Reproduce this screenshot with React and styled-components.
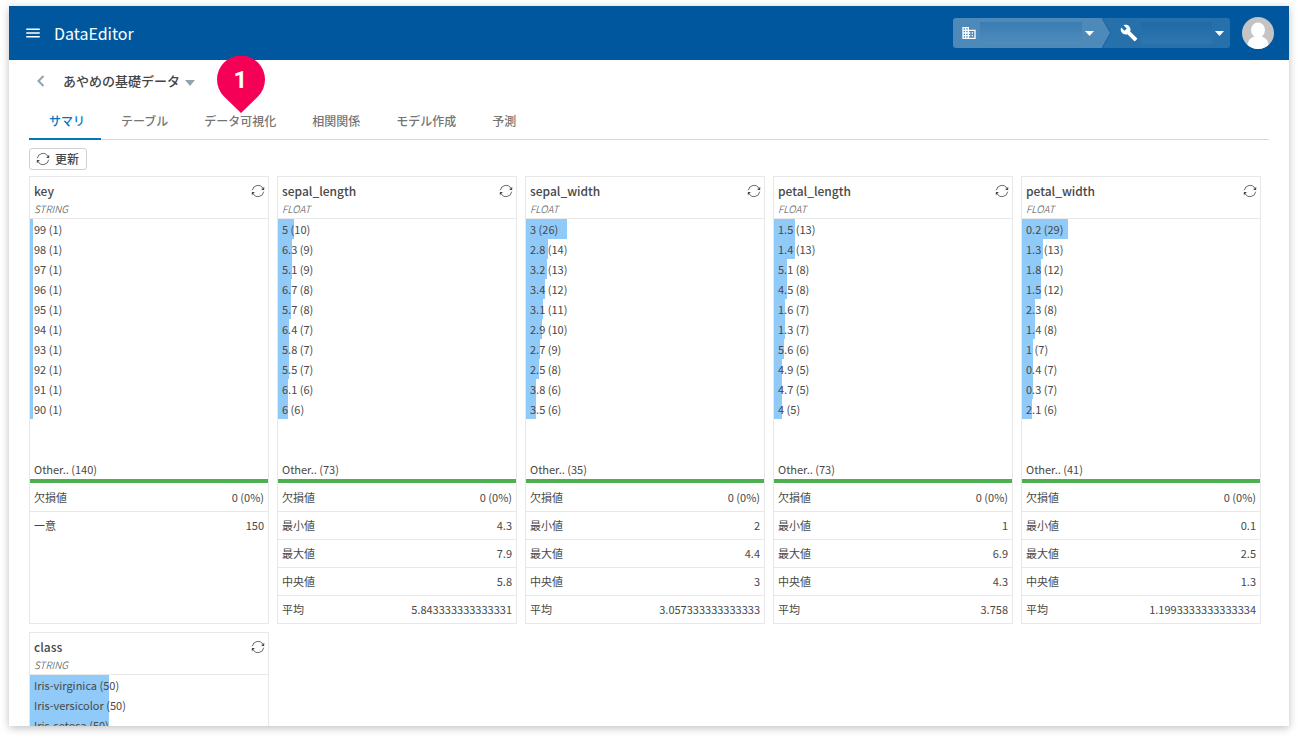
import styled, { createGlobalStyle } from "styled-components";
import { MdMenu, MdBusiness, MdBuild } from "react-icons/md";

const TOTAL = 150;

const tabs = ["サマリ", "テーブル", "データ可視化", "相関関係", "モデル作成", "予測"];

const columns = [
    {
        name: "key",
        type: "STRING",
        values: [["99", 1], ["98", 1], ["97", 1], ["96", 1], ["95", 1], ["94", 1], ["93", 1], ["92", 1], ["91", 1], ["90", 1]],
        other: 140,
        stats: [["欠損値", "0 (0%)"], ["一意", "150"]],
    },
    {
        name: "sepal_length",
        type: "FLOAT",
        values: [["5", 10], ["6.3", 9], ["5.1", 9], ["6.7", 8], ["5.7", 8], ["6.4", 7], ["5.8", 7], ["5.5", 7], ["6.1", 6], ["6", 6]],
        other: 73,
        stats: [["欠損値", "0 (0%)"], ["最小値", "4.3"], ["最大値", "7.9"], ["中央値", "5.8"], ["平均", "5.843333333333331"]],
    },
    {
        name: "sepal_width",
        type: "FLOAT",
        values: [["3", 26], ["2.8", 14], ["3.2", 13], ["3.4", 12], ["3.1", 11], ["2.9", 10], ["2.7", 9], ["2.5", 8], ["3.8", 6], ["3.5", 6]],
        other: 35,
        stats: [["欠損値", "0 (0%)"], ["最小値", "2"], ["最大値", "4.4"], ["中央値", "3"], ["平均", "3.057333333333333"]],
    },
    {
        name: "petal_length",
        type: "FLOAT",
        values: [["1.5", 13], ["1.4", 13], ["5.1", 8], ["4.5", 8], ["1.6", 7], ["1.3", 7], ["5.6", 6], ["4.9", 5], ["4.7", 5], ["4", 5]],
        other: 73,
        stats: [["欠損値", "0 (0%)"], ["最小値", "1"], ["最大値", "6.9"], ["中央値", "4.3"], ["平均", "3.758"]],
    },
    {
        name: "petal_width",
        type: "FLOAT",
        values: [["0.2", 29], ["1.3", 13], ["1.8", 12], ["1.5", 12], ["2.3", 8], ["1.4", 8], ["1", 7], ["0.4", 7], ["0.3", 7], ["2.1", 6]],
        other: 41,
        stats: [["欠損値", "0 (0%)"], ["最小値", "0.1"], ["最大値", "2.5"], ["中央値", "1.3"], ["平均", "1.1993333333333334"]],
    },
    {
        name: "class",
        type: "STRING",
        values: [["Iris-virginica", 50], ["Iris-versicolor", 50], ["Iris-setosa", 50]],
    },
];

function Caret({ width, height }) {
    return (
        <svg width={width} height={height} viewBox="0 0 10 5" preserveAspectRatio="none" aria-hidden="true">
            <path d="M0 0h10L5 5z" fill="currentColor" />
        </svg>
    );
}

function RefreshIcon() {
    return (
        <svg width="14" height="14" viewBox="0 0 14 14" aria-hidden="true">
            <g fill="none" stroke="currentColor" strokeWidth="0.8">
                <path d="M1.300 6.300A5.700 5.700 0 0 1 12 4.500" />
                <path d="M12.700 7.700A5.700 5.700 0 0 1 2 9.500" />
            </g>
            <path d="M13.200 2.800v3.100H10.100zM.8 11.200V8.100h3.100z" fill="currentColor" />
        </svg>
    );
}

function Avatar() {
    return (
        <svg width="32" height="32" viewBox="0 0 32 32" aria-hidden="true">
            <clipPath id="avatar">
                <circle cx="16" cy="16" r="16" />
            </clipPath>
            <g clipPath="url(#avatar)">
                <rect width="32" height="32" fill="#c4c4c4" />
                <ellipse cx="16" cy="13" rx="7" ry="7.5" fill="#fff" />
                <path d="M5 32c0-8 3-11 7-12.500h8c4 1.500 7 4.500 7 12.500z" fill="#fff" />
            </g>
        </svg>
    );
}

function ColumnCard({ name, type, values, other, stats }) {
    return (
        <Card>
            <CardHeader>
                <div>
                    <ColumnName>{name}</ColumnName>
                    <ColumnType>{type}</ColumnType>
                </div>
                <IconButton aria-label={`${name} を更新`}>
                    <RefreshIcon />
                </IconButton>
            </CardHeader>
            <Values>
                {values.map(([value, count]) => (
                    <Value key={value}>
                        <Bar style={{ width: `${(count / TOTAL) * 100}%` }} />
                        <span>{`${value} (${count})`}</span>
                    </Value>
                ))}
            </Values>
            <Other>{other && `Other.. (${other})`}</Other>
            {stats && (
                <Stats>
                    <tbody>
                        {stats.map(([label, value]) => (
                            <tr key={label}>
                                <th scope="row">{label}</th>
                                <td>{value}</td>
                            </tr>
                        ))}
                    </tbody>
                </Stats>
            )}
        </Card>
    );
}

export default function App() {
    return (
        <>
            <GlobalStyle />
            <Frame>
                <Header>
                    <IconButton aria-label="メニュー">
                        <MdMenu size={18} />
                    </IconButton>
                    <AppName>DataEditor</AppName>
                    <Switcher>
                        <Organization aria-label="組織">
                            <MdBusiness size={16} />
                            <OrganizationName />
                            <Caret width={9} height={5} />
                        </Organization>
                        <Arrow viewBox="0 0 9 30" preserveAspectRatio="none" aria-hidden="true">
                            <path d="M0 0h9v30H0z" fill="#2670ab" />
                            <path d="M0 0l8.500 15L0 30z" fill="#4d8aba" />
                            <path d="M0 0l8.500 15L0 30" fill="none" stroke="#1763a3" />
                        </Arrow>
                        <Project aria-label="プロジェクト">
                            <MdBuild size={18} />
                            <ProjectName />
                            <Caret width={9} height={5} />
                        </Project>
                    </Switcher>
                    <IconButton aria-label="アカウント">
                        <Avatar />
                    </IconButton>
                </Header>
                <Main>
                    <TitleRow>
                        <BackButton aria-label="戻る">
                            <svg width="8" height="12" viewBox="0 0 8 12" aria-hidden="true">
                                <path d="M6.500 1L1.500 6l5 5" fill="none" stroke="currentColor" strokeWidth="2" />
                            </svg>
                        </BackButton>
                        <TitleButton>
                            あやめの基礎データ
                            <Caret width={10} height={6} />
                        </TitleButton>
                    </TitleRow>
                    <Tabs>
                        {tabs.map((tab, index) => (
                            <Tab key={tab} $active={index === 0}>
                                {tab}
                                {index === 2 && (
                                    <Pin>
                                        <svg width="48" height="57" viewBox="0 0 48 57" aria-hidden="true">
                                            <path d="M24 57L7 40.500A24 24 0 1 1 41 40.500z" fill="#f50057" />
                                        </svg>
                                        <PinNumber>1</PinNumber>
                                    </Pin>
                                )}
                            </Tab>
                        ))}
                    </Tabs>
                    <Toolbar>
                        <RefreshButton>
                            <RefreshIcon />
                            更新
                        </RefreshButton>
                    </Toolbar>
                    <Cards>
                        {columns.map((column) => (
                            <ColumnCard key={column.name} {...column} />
                        ))}
                    </Cards>
                </Main>
            </Frame>
        </>
    );
}

const GlobalStyle = createGlobalStyle`
    * {
        box-sizing: border-box;
    }
    body {
        margin: 0;
        background-color: #fff;
        color: #484848;
        font-family: "Noto Sans CJK JP", sans-serif;
        font-size: 11px;
        line-height: 20px;
    }
    button {
        padding: 0;
        border: none;
        background: none;
        color: inherit;
        font: inherit;
        cursor: pointer;
    }
    svg {
        display: block;
        flex: none;
    }
`

const Frame = styled.div`
    display: flex;
    flex-direction: column;
    height: calc(100vh - 18px);
    margin: 6px 9px 12px;
    overflow: hidden;
    background-color: #fff;
    box-shadow: 0 2px 8px rgba(0, 0, 0, 0.25);
`

const Header = styled.header`
    display: flex;
    align-items: center;
    flex: none;
    height: 54px;
    padding: 0 15px;
    background-color: #00579d;
    color: #fff;
`

const IconButton = styled.button`
    display: flex;
`

const AppName = styled.h1`
    flex: 1;
    margin: 0 0 0 12px;
    font-size: 16px;
    font-weight: 400;
`

const Switcher = styled.div`
    display: flex;
    height: 30px;
    margin-right: 12px;
    border-radius: 3px;
    overflow: hidden;
`

const Organization = styled.button`
    display: flex;
    align-items: center;
    gap: 3px;
    padding: 0 8px;
    background-color: #4d8aba;
`

const Project = styled(Organization)`
    padding: 0 6px 0 9px;
    background-color: #2670ab;
`

const Arrow = styled.svg`
    width: 9px;
    height: 30px;
`

const OrganizationName = styled.span`
    width: 102px;
    height: 22px;
    background: linear-gradient(#3a7db3, #4f8cbb);
`

const ProjectName = styled(OrganizationName)`
    width: 71px;
    background: linear-gradient(#1f6ba8, #2f76ae);
`

const Main = styled.main`
    padding: 0 20px;
`

const TitleRow = styled.div`
    display: flex;
    align-items: center;
    height: 42px;
    padding-left: 8px;
    gap: 18px;
`

const BackButton = styled(IconButton)`
    color: #90a4ae;
`

const TitleButton = styled.button`
    display: flex;
    align-items: baseline;
    gap: 5px;
    color: #444;
    font-size: 13px;
    font-weight: 500;
    svg {
        color: #90a4ae;
    }
`

const Tabs = styled.nav`
    display: flex;
    height: 38px;
    border-bottom: 1px solid #d5d8da;
`

const Tab = styled.button`
    position: relative;
    height: 38px;
    padding: 1px 16px 0 20px;
    border-bottom: 2px solid ${({ $active }) => ($active ? "#0277bd" : "transparent")};
    color: ${({ $active }) => ($active ? "#0277bd" : "#757575")};
    font-size: 12px;
    font-weight: 500;
`

const Pin = styled.span`
    position: absolute;
    bottom: 25px;
    left: calc(50% - 21px);
`

const PinNumber = styled.span`
    position: absolute;
    inset: 0 2px 9px 0;
    color: #fff;
    font: 700 24px/48px Roboto, sans-serif;
    text-align: center;
`

const Toolbar = styled.div`
    padding: 8px 0 6px;
`

const RefreshButton = styled.button`
    display: flex;
    align-items: center;
    gap: 5px;
    height: 22px;
    padding: 0 7px 0 6px;
    border: 1px solid #d0d0d0;
    border-radius: 3px;
    font-size: 12px;
    font-weight: 500;
`

const Cards = styled.div`
    display: grid;
    grid-template-columns: repeat(auto-fill, 240px);
    gap: 8px;
`

const Card = styled.section`
    border: 1px solid #e8e8e8;
`

const CardHeader = styled.header`
    display: flex;
    justify-content: space-between;
    align-items: flex-start;
    height: 42px;
    padding: 7px 3px 0 4px;
    border-bottom: 1px solid #e8e8e8;
`

const ColumnName = styled.h2`
    margin: 0 0 2px;
    font-size: 12px;
    font-weight: 500;
    line-height: 14px;
`

const ColumnType = styled.p`
    margin: 0;
    font-size: 10px;
    font-style: italic;
    font-weight: 300;
    line-height: 18px;
`

const Values = styled.ul`
    height: 240px;
    margin: 0;
    padding: 0;
    list-style: none;
`

const Value = styled.li`
    position: relative;
    height: 20px;
    padding-left: 4px;
    span {
        position: relative;
    }
`

const Bar = styled.div`
    position: absolute;
    top: 0;
    bottom: 0;
    left: 0;
    min-width: 3px;
    background-color: #90caf9;
`

const Other = styled.div`
    height: 24px;
    padding-left: 4px;
    border-bottom: 4px solid #4caf50;
`

const Stats = styled.table`
    width: 100%;
    border-spacing: 0;
    th, td {
        height: 28px;
        padding: 0 4px 1px;
        font-weight: 400;
        text-align: left;
    }
    td {
        text-align: right;
    }
    tr + tr > * {
        border-top: 1px solid #e8e8e8;
    }
`
